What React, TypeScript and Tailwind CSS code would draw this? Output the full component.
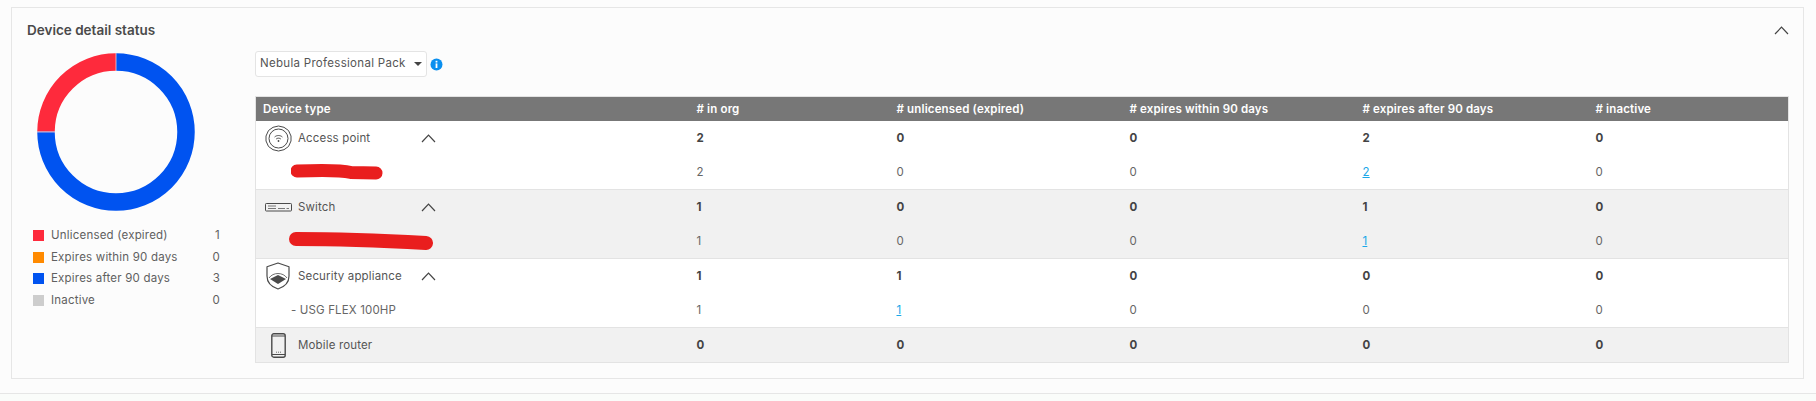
import type { ReactNode } from 'react'

const FONT = "font-['Inter','Liberation_Sans',sans-serif]"

type Sub = { label: ReactNode; values: (number | { link: number })[] }
type Group = { name: string; icon: ReactNode; totals: number[]; sub?: Sub; shaded?: boolean }

function Chevron({ className = '' }: { className?: string }) {
  return (
    <svg width="15" height="9" viewBox="0 0 15 9" fill="none" className={className}>
      <path d="M1 8 L7.5 1.2 L14 8" stroke="#444" strokeWidth="1.2" />
    </svg>
  )
}

function ApIcon() {
  return (
    <svg width="27" height="27" viewBox="0 0 27 27" fill="none" stroke="#4a4a4a">
      <path d="M13.5 1 L19 2.3 L23.5 5.5 L26 11 L26 16 L23.5 21.5 L19 24.7 L13.5 26 L8 24.7 L3.5 21.5 L1 16 L1 11 L3.5 5.5 L8 2.3 Z" strokeWidth="1" strokeLinejoin="round" />
      <circle cx="13.5" cy="13.5" r="9.5" strokeWidth="1" />
      <path d="M9.6 12 C11.8 10 15.2 10 17.4 12" strokeWidth="1" />
      <path d="M11.2 14 C12.5 12.9 14.5 12.9 15.8 14" strokeWidth="1" />
      <circle cx="13.5" cy="16" r="0.9" fill="#4a4a4a" stroke="none" />
    </svg>
  )
}

function SwitchIcon() {
  return (
    <svg width="27" height="9" viewBox="0 0 27 9" fill="none">
      <rect x="0.5" y="0.5" width="26" height="7.5" rx="0.8" stroke="#4a4a4a" />
      <path d="M3 3 H11 M3 5.5 H11 M13 5.5 H20 M21.5 5.5 H24" stroke="#777" strokeWidth="1" />
    </svg>
  )
}

function ShieldIcon() {
  return (
    <svg width="24" height="28" viewBox="0 0 24 28" fill="none">
      <path d="M12 1 L23 4.8 V14 C23 20.5 18 25 12 27 C6 25 1 20.5 1 14 V4.8 Z" stroke="#4a4a4a" strokeWidth="1.2" strokeLinejoin="round" />
      <path d="M12 13 L20 17 L12 22 L4 17 Z" fill="#4a4a4a" />
      <path d="M3 16 C7 10 17 10 21 16" stroke="#4a4a4a" strokeWidth="0.8" />
    </svg>
  )
}

function PhoneIcon() {
  return (
    <svg width="15" height="25" viewBox="0 0 15 25" fill="none">
      <rect x="0.8" y="0.8" width="13.4" height="23.4" rx="2" stroke="#4a4a4a" strokeWidth="1.4" />
      <path d="M1 3 H14 M1 21.5 H14" stroke="#4a4a4a" strokeWidth="1.2" />
      <path d="M5 19.2 H5.8 M7.1 19.2 H7.9 M9.2 19.2 H10" stroke="#4a4a4a" strokeWidth="1" />
    </svg>
  )
}

const GROUPS: Group[] = [
  {
    name: 'Access point',
    icon: <ApIcon />,
    totals: [2, 0, 0, 2, 0],
    sub: {
      label: (
        <svg width="92" height="18" viewBox="0 0 92 18" className="block">
          <path d="M6 8 C30 7 50 7 60 9.5 L85 10" stroke="#e91e1e" strokeWidth="13" strokeLinecap="round" fill="none" />
        </svg>
      ),
      values: [2, 0, 0, { link: 2 }, 0],
    },
  },
  {
    name: 'Switch',
    icon: <SwitchIcon />,
    shaded: true,
    totals: [1, 0, 0, 1, 0],
    sub: {
      label: (
        <svg width="144" height="18" viewBox="0 0 144 18" className="block -ml-[2px]">
          <path d="M7 7 C50 7 100 9 137 11" stroke="#e91e1e" strokeWidth="14" strokeLinecap="round" fill="none" />
        </svg>
      ),
      values: [1, 0, 0, { link: 1 }, 0],
    },
  },
  {
    name: 'Security appliance',
    icon: <ShieldIcon />,
    totals: [1, 1, 0, 0, 0],
    sub: { label: '- USG FLEX 100HP', values: [1, { link: 1 }, 0, 0, 0] },
  },
  { name: 'Mobile router', icon: <PhoneIcon />, shaded: true, totals: [0, 0, 0, 0, 0] },
]

const LEGEND = [
  { label: 'Unlicensed (expired)', color: 'bg-[#fe2a3c]', value: 1 },
  { label: 'Expires within 90 days', color: 'bg-[#ff8a00]', value: 0 },
  { label: 'Expires after 90 days', color: 'bg-[#0053f0]', value: 3 },
  { label: 'Inactive', color: 'bg-[#cdcdcd]', value: 0 },
]

const HEADERS = ['# in org', '# unlicensed (expired)', '# expires within 90 days', '# expires after 90 days', '# inactive']

function Donut() {
  const r = 70
  const c = 2 * Math.PI * r
  return (
    <svg width="158" height="158" viewBox="0 0 158 158" className="block">
      <g transform="rotate(-90 79 79)">
        <circle cx="79" cy="79" r={r} fill="none" stroke="#0053f0" strokeWidth="17.5" strokeDasharray={`${c * 0.75} ${c}`} />
        <circle cx="79" cy="79" r={r} fill="none" stroke="#fe2a3c" strokeWidth="17.5" strokeDasharray={`${c * 0.25} ${c}`} strokeDashoffset={-c * 0.75} />
      </g>
      <path d="M79 0 V18 M0 79 H18" stroke="#f4d0d6" strokeWidth="0.8" />
    </svg>
  )
}

function Legend() {
  return (
    <div className="-ml-[4px] mt-[14px] flex w-[187px] flex-col text-[11.5px] tracking-[0.2px] text-[#606060]">
      {LEGEND.map((item) => (
        <div key={item.label} className="flex h-[21.6px] items-center">
          <span className={`mr-[7px] h-[11px] w-[11px] ${item.color}`} />
          <span>{item.label}</span>
          <span className="ml-auto">{item.value}</span>
        </div>
      ))}
    </div>
  )
}

function Cell({ value }: { value: number | { link: number } }) {
  if (typeof value === 'number') return <td className="px-2 py-0 pt-px">{value}</td>
  return (
    <td className="px-2 py-0 pt-px">
      <a className="text-[#1aa7e8] underline">{value.link}</a>
    </td>
  )
}

function GroupRows({ group }: { group: Group }) {
  const bg = group.shaded ? 'bg-[#f1f1f1]' : 'bg-white'
  return (
    <>
      <tr className={`${bg} h-[35px] ${group.sub ? '' : 'border-b border-[#e3e3e3]'}`}>
        <td className="py-0 pl-[7px] pr-0">
          <div className="flex items-center">
            <span className="flex w-[30px] justify-center">{group.icon}</span>
            <span className="ml-[5px] w-[123px] pt-px text-[#555]">{group.name}</span>
            {group.sub && <Chevron />}
          </div>
        </td>
        {group.totals.map((n, i) => (
          <td key={i} className="px-2 py-0 pt-px font-bold text-[#444]">
            {n}
          </td>
        ))}
      </tr>
      {group.sub && (
        <tr className={`${bg} h-[34px] border-b border-[#e3e3e3] text-[#666]`}>
          <td className="py-0 pl-[35px] pr-0">{group.sub.label}</td>
          {group.sub.values.map((v, i) => (
            <Cell key={i} value={v} />
          ))}
        </tr>
      )}
    </>
  )
}

function DeviceTable() {
  return (
    <table className="w-[1533px] table-fixed border-collapse border border-[#e3e3e3] text-[11.5px] tracking-[0.15px]">
      <colgroup>
        <col className="w-[433px]" />
        <col className="w-[200px]" />
        <col className="w-[233px]" />
        <col className="w-[233px]" />
        <col className="w-[233px]" />
        <col className="w-[201px]" />
      </colgroup>
      <thead>
        <tr className="h-[24px] bg-[#777777] text-left text-white">
          <th className="py-0 pl-[7px] pr-2 pt-px font-semibold">Device type</th>
          {HEADERS.map((h) => (
            <th key={h} className="px-2 py-0 pt-px font-semibold">
              {h}
            </th>
          ))}
        </tr>
      </thead>
      <tbody>
        {GROUPS.map((g) => (
          <GroupRows key={g.name} group={g} />
        ))}
      </tbody>
    </table>
  )
}

export default function App() {
  return (
    <div className={`${FONT} h-[401px] w-[1816px] overflow-hidden bg-[#fafcfa]`}>
      <div className="h-[394px] border-b border-[#e6e6e6] bg-[#fcfcfc] pl-[11px] pr-[12px] pt-[7px]">
        <section className="h-[372px] border border-[#e6e6e6] bg-[#fcfcfc] pl-[15px] pr-[14px] pt-[13px]">
          <header className="flex h-[18px] items-center justify-between">
            <h2 className="text-[13.5px] font-semibold text-[#4a4a4a]">Device detail status</h2>
            <Chevron />
          </header>
          <div className="flex">
            <div className="w-[230px] pl-[10px] pt-[14px]">
              <Donut />
              <Legend />
            </div>
            <div className="pt-[12px]">
              <div className="flex items-center">
                <div className="flex h-[26px] w-[172px] items-center rounded-[3px] border border-[#e4e4e4] bg-white pl-[4px] text-[11.5px] tracking-[0.3px] text-[#555]">
                  <span>Nebula Professional Pack</span>
                  <span className="ml-auto mr-[4px] h-0 w-0 border-x-[4px] border-t-[4px] border-x-transparent border-t-[#444]" />
                </div>
                <svg width="13" height="13" viewBox="0 0 13 13" className="ml-[3px]">
                  <circle cx="6.5" cy="6.5" r="6" fill="#0a8fef" />
                  <rect x="5.6" y="5.4" width="1.8" height="4.6" fill="#fff" />
                  <rect x="5.6" y="2.8" width="1.8" height="1.7" fill="#fff" />
                </svg>
              </div>
              <div className="mt-[19px]">
                <DeviceTable />
              </div>
            </div>
          </div>
        </section>
      </div>
    </div>
  )
}
